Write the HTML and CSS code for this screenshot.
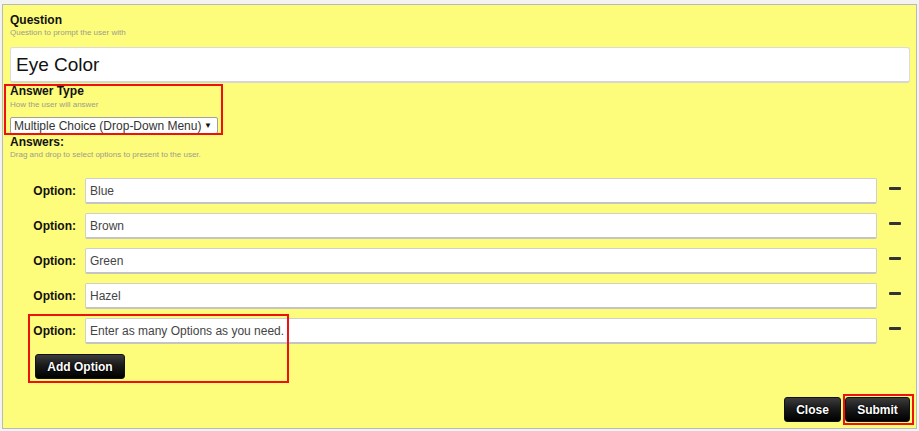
FILE: index.html
```html
<!DOCTYPE html>
<html>
<head>
<meta charset="utf-8">
<link rel="stylesheet" href="styles.css">
</head>
<body>
<div class="panel">
  <div class="label">Question</div>
  <div class="hint">Question to prompt the user with</div>
  <input class="big-input" type="text" value="Eye Color">

  <div class="answer-type annotated">
    <div class="label">Answer Type</div>
    <div class="hint hint-2">How the user will answer</div>
    <div class="select"><span>Multiple Choice (Drop-Down Menu)</span><span class="arrow">▼</span></div>
  </div>

  <div class="label label-answers">Answers:</div>
  <div class="hint">Drag and drop to select options to present to the user.</div>

  <div class="options">
    <div class="option-row">
      <label class="opt-label">Option:</label>
      <input class="opt-input" type="text" value="Blue">
      <span class="minus"></span>
    </div>
    <div class="option-row">
      <label class="opt-label">Option:</label>
      <input class="opt-input" type="text" value="Brown">
      <span class="minus"></span>
    </div>
    <div class="option-row">
      <label class="opt-label">Option:</label>
      <input class="opt-input" type="text" value="Green">
      <span class="minus"></span>
    </div>
    <div class="option-row">
      <label class="opt-label">Option:</label>
      <input class="opt-input" type="text" value="Hazel">
      <span class="minus"></span>
    </div>
    <div class="new-option annotated">
      <div class="option-row">
        <label class="opt-label">Option:</label>
        <input class="opt-input" type="text" value="Enter as many Options as you need.">
        <span class="minus"></span>
      </div>
      <button class="btn btn-add">Add Option</button>
    </div>
  </div>

  <div class="footer">
    <button class="btn btn-close">Close</button>
    <button class="btn btn-submit annotated">Submit</button>
  </div>
</div>
</body>
</html>
```

FILE: styles.css
```css
html, body {
  margin: 0;
  padding: 0;
}
body {
  background: #f3f3f3;
  font-family: "Liberation Sans", Arial, sans-serif;
  color: #111;
  padding: 4px 2px 0 2px;
  height: 431px;
  box-sizing: border-box;
}
.panel {
  width: 915px;
  height: 425px;
  box-sizing: border-box;
  background: #fefc7b;
  border: 1px solid #b9b9b9;
  padding: 8px 6px 6px 7px;
  display: flex;
  flex-direction: column;
}
.label {
  font-weight: bold;
  font-size: 12px;
  line-height: 14px;
  color: #111;
}
.hint {
  font-size: 8px;
  line-height: 10px;
  color: #9c9c8c;
  margin-top: 1px;
}
.hint-2 {
  margin-top: 2px;
}
.big-input {
  margin: 9px 0 0 0;
  height: 36px;
  box-sizing: border-box;
  width: 100%;
  border: 1px solid #dcdcdc;
  border-bottom: 2px solid #d6d6d6;
  border-radius: 3px;
  background: #fff;
  font-family: "Liberation Sans", Arial, sans-serif;
  font-size: 19px;
  color: #111;
  padding: 0 5px;
  outline: none;
}
.annotated {
  position: relative;
}
.annotated::after {
  content: "";
  position: absolute;
  border: 2px solid #ee1111;
  pointer-events: none;
}
.answer-type {
  margin-top: 1px;
}
.answer-type::after {
  top: 0;
  bottom: -1px;
  left: -6px;
  width: 215px;
}
.select {
  margin-top: 7px;
  width: 208px;
  height: 17px;
  box-sizing: border-box;
  border: 1px solid #a0a0a0;
  border-radius: 2px;
  background: #fff;
  display: flex;
  align-items: center;
  justify-content: space-between;
  padding: 0 5px 0 3px;
  font-size: 12px;
  color: #333;
}
.select .arrow {
  font-size: 8px;
  color: #111;
}
.label-answers {
  margin-top: 1px;
}
.options {
  margin-top: 18px;
  display: flex;
  flex-direction: column;
  gap: 9px;
}
.option-row {
  display: flex;
  align-items: center;
  padding-right: 9px;
}
.opt-label {
  width: 75px;
  box-sizing: border-box;
  padding-right: 9px;
  text-align: right;
  font-weight: bold;
  font-size: 12px;
  color: #111;
  flex: none;
}
.opt-input {
  flex: 1;
  min-width: 0;
  height: 26px;
  box-sizing: border-box;
  margin: 0;
  border: 1px solid #cfcfcf;
  border-bottom: 2px solid #c4c4c4;
  border-radius: 2px;
  background: #fff;
  font-family: "Liberation Sans", Arial, sans-serif;
  font-size: 12px;
  color: #444;
  padding: 0 4px;
  outline: none;
}
.minus {
  flex: none;
  width: 12px;
  height: 3px;
  background: #333;
  margin-left: 12px;
  margin-bottom: 5px;
  border-radius: 1px;
}
.new-option {
  display: flex;
  flex-direction: column;
  align-items: flex-start;
}
.new-option::after {
  top: -4px;
  bottom: -4px;
  left: 18px;
  width: 257px;
}
.new-option .option-row {
  align-self: stretch;
}
.btn {
  font-family: "Liberation Sans", Arial, sans-serif;
  font-weight: bold;
  font-size: 12px;
  color: #fff;
  background: linear-gradient(#3c3c3c 0%, #1a1a1a 45%, #000 100%);
  border: 1px solid #111;
  border-radius: 3px;
  text-shadow: 0 0 2px #000, 0 1px 1px #000;
  padding: 0;
  cursor: pointer;
}
.btn-add {
  margin: 10px 0 0 25px;
  width: 90px;
  height: 25px;
}
.footer {
  margin-top: auto;
  display: flex;
  justify-content: flex-end;
  gap: 4px;
}
.btn-close {
  width: 57px;
  height: 25px;
}
.btn-submit {
  width: 65px;
  height: 25px;
}
.btn-submit::after {
  top: -4px;
  bottom: -4px;
  left: -3px;
  right: -5px;
}
```
